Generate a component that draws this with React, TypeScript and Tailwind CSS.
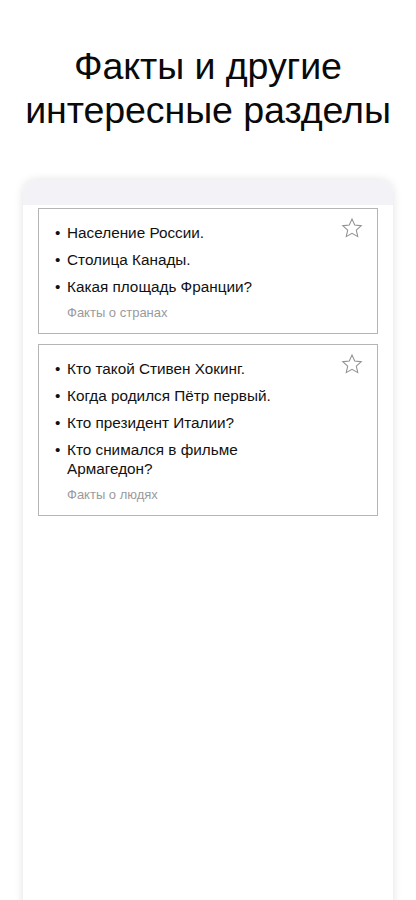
import React from "react";

const Star = () => (
  <svg width="22" height="22" viewBox="0 0 24 24" fill="none" stroke="#8e8e93" strokeWidth="1.1" strokeLinejoin="miter">
    <path d="M12 2.2l2.95 6.6 7.15.7-5.4 4.8 1.6 7.05L12 17.7l-6.3 3.65 1.6-7.05-5.4-4.8 7.15-.7z" />
  </svg>
);

type CardProps = { items: string[]; footer: string };

const Card = ({ items, footer }: CardProps) => (
  <div className="relative border border-[#b5b5b8] bg-white pl-[16px] pr-[40px] pt-[14px] pb-[11px]">
    <div className="absolute right-[14px] top-[8px]">
      <Star />
    </div>
    <ul className="flex flex-col gap-[8px]">
      {items.map((t) => (
        <li key={t} className="flex text-[15.3px] leading-[19px] text-[#111]">
          <span className="w-[12px] shrink-0">•</span>
          <span className="max-w-[232px]">{t}</span>
        </li>
      ))}
    </ul>
    <div className="mt-[8px] pl-[12px] text-[13px] leading-[18px] text-[#9a9a9e]">{footer}</div>
  </div>
);

export default function App() {
  return (
    <div className="h-[900px] overflow-hidden bg-white font-['Liberation_Sans',Arial,sans-serif]">
      <h1 className="pt-[44px] text-center text-[37.6px] leading-[44px] font-normal text-[#0a0a0a] tracking-[-0.1px]">
        Факты и другие
        <br />
        интересные разделы
      </h1>
      <div className="mx-[23px] mt-[48px] h-[800px] rounded-t-[13px] bg-white shadow-[0_0_10px_rgba(0,0,0,0.12)]">
        <div className="h-[25px] rounded-t-[13px] bg-[#f2f2f7]" />
        <div className="flex flex-col gap-[10px] px-[15px] pt-[3px]">
          <Card
            items={["Население России.", "Столица Канады.", "Какая площадь Франции?"]}
            footer="Факты о странах"
          />
          <Card
            items={[
              "Кто такой Стивен Хокинг.",
              "Когда родился Пётр первый.",
              "Кто президент Италии?",
              "Кто снимался в фильме Армагедон?",
            ]}
            footer="Факты о людях"
          />
        </div>
      </div>
    </div>
  );
}
